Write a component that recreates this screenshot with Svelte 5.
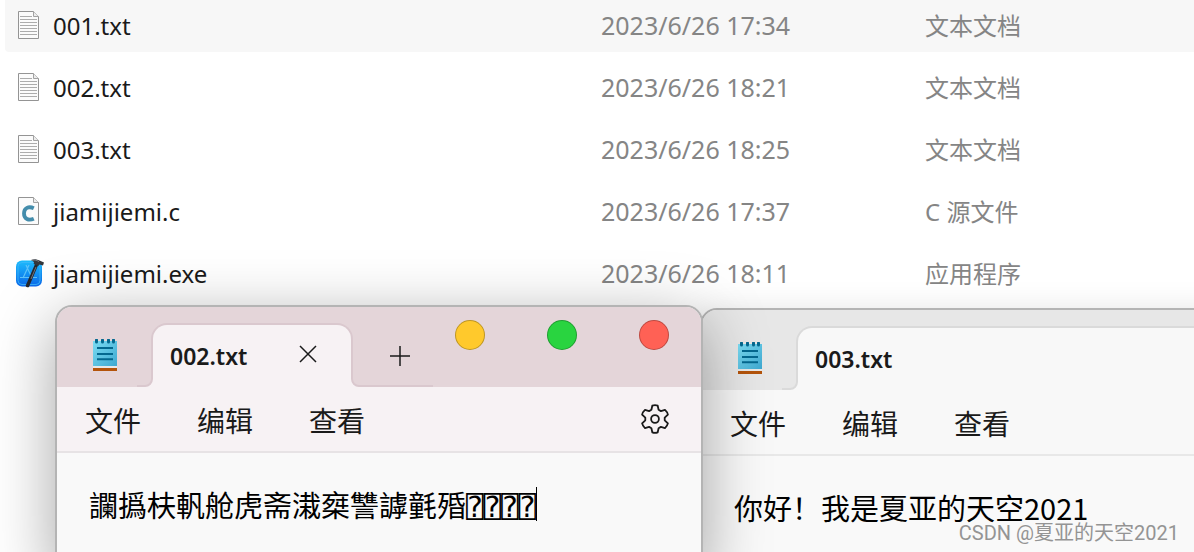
<script lang="ts">
interface FileRow {
	name: string;
	date: string;
	type: string;
	icon: "text" | "c" | "app";
	active?: boolean;
}

const files: FileRow[] = [
	{ name: "001.txt", date: "2023/6/26 17:34", type: "文本文档", icon: "text", active: true },
	{ name: "002.txt", date: "2023/6/26 18:21", type: "文本文档", icon: "text" },
	{ name: "003.txt", date: "2023/6/26 18:25", type: "文本文档", icon: "text" },
	{ name: "jiamijiemi.c", date: "2023/6/26 17:37", type: "C 源文件", icon: "c" },
	{ name: "jiamijiemi.exe", date: "2023/6/26 18:11", type: "应用程序", icon: "app" },
];

const menus = ["文件", "编辑", "查看"];

// 加密后的内容，末尾是不可显示的控制字符
let encrypted = $state("讕撝枎軓舱虎斋溨椉讐謼氃殙⍰⍰⍰⍰");
let decrypted = $state("你好！我是夏亚的天空2021");
</script>

{#snippet fileIcon(kind: string)}
	{#if kind === "app"}
		<svg class="file-icon" viewBox="0 0 30 30" aria-hidden="true">
			<defs>
				<linearGradient id="appBlue" x1="0" y1="0" x2="0" y2="1">
					<stop offset="0" stop-color="#1cbcfc" />
					<stop offset="1" stop-color="#0b68ea" />
				</linearGradient>
			</defs>
			<rect x="1" y="1.500" width="26" height="26" rx="6" fill="url(#appBlue)" />
			<rect x="3" y="3.500" width="22" height="22" rx="4" fill="none" stroke="#3fb9fa" stroke-width=".8" />
			<path d="M11 6l6 13M14 6L8 19M5 18.500h17" fill="none" stroke="#5cc2fa" stroke-width="1.200" />
			<path d="M20.500 4l3 1.300-9.500 22.500c-.6 1.300-4 0-3.200-1.600z" fill="#25272c" />
			<path d="M16 1c3-1.400 6-.9 8.500.6l4.500 1.800-1 3-3.500-1-1.300 1.500-4.500-1.800.3-2z" fill="#34373c" />
			<path d="M17 1.400c3-.8 5 0 7 1.200M21 8l-5 12" fill="none" stroke="#92979d" stroke-width=".7" />
		</svg>
	{:else}
		<svg class="file-icon" viewBox="0 0 30 30" aria-hidden="true">
			<path d="M3.500 .5h15l5 5v22h-20z" fill="#fbfbfb" stroke="#949494" />
			<path d="M18.500 .5v5h5" fill="#ececec" stroke="#a2a2a2" />
			{#if kind === "text"}
				<path d="M5 5.500h12M5 8.500h17M5 11.500h17M5 14.500h17M5 17.500h17M5 20.500h17M5 23.500h17" fill="none" stroke="#acacac" />
			{:else}
				<path d="M18.800 11.300c-5.200-2.500-9.800-.2-9.800 5.200s4.600 7.500 9.800 5.200" fill="none" stroke="#438cab" stroke-width="3.800" />
			{/if}
		</svg>
	{/if}
{/snippet}

{#snippet notepadIcon()}
	<svg class="notepad-icon" viewBox="0 0 24 32" aria-hidden="true">
		<defs>
			<linearGradient id="pad" x1="0" y1="0" x2="1" y2="1">
				<stop offset="0" stop-color="#7bdcf3" />
				<stop offset="1" stop-color="#3ea8d0" />
			</linearGradient>
		</defs>
		<path d="M0 27h24v5H0z" fill="#b4540b" />
		<path d="M0 26h24v3H0z" fill="#e8e8e8" />
		<path d="M0 2h24v25H0z" fill="url(#pad)" />
		<path d="M3.500 1v2M9.500 1v2M15.500 1v2M20.500 1v2" stroke="#04688f" stroke-width="3" stroke-linecap="round" />
		<path d="M4 9h16M4 15h16M4 20.200h16" stroke="#04688f" stroke-width="2" />
	</svg>
{/snippet}

{#snippet flare(side: string)}
	<svg class="flare {side}" viewBox="0 0 16 12" aria-hidden="true">
		<path class="flare-fill" d="M6 12A9 9 0 0 0 15 3V0H16V12z" />
		<path class="flare-line" d="M0 11H8A7 7 0 0 0 15 4V0" />
	</svg>
{/snippet}

{#snippet menuBar()}
	<nav class="menu-bar">
		{#each menus as menu}
			<button class="menu-item">{menu}</button>
		{/each}
		<button class="settings" aria-label="设置">
			<svg viewBox="0 0 28 30" aria-hidden="true">
				<path
					d="M11.300 1.700Q14 .7 16.700 1.700L17.600 5.800 19.900 7.100 24 5.900Q26.300 8 26.900 10.600L23.700 13.700V16.300L26.900 19.400Q26.300 22 24 24.100L19.900 22.900 17.600 24.200 16.700 28.300Q14 29.300 11.300 28.300L10.400 24.200 8.100 22.900 4 24.100Q1.700 22 1.100 19.400L4.300 16.300V13.700L1.100 10.600Q1.700 8 4 5.900L8.100 7.100 10.400 5.800z"
				/>
				<circle cx="14" cy="15" r="3.900" />
			</svg>
		</button>
	</nav>
{/snippet}

<main class="desktop">
	<!-- 文件列表 -->
	<table class="files">
		<colgroup>
			<col class="col-name" />
			<col class="col-date" />
			<col />
		</colgroup>
		<tbody>
			{#each files as file}
				<tr class:active={file.active}>
					<td>
						<div class="name">
							{@render fileIcon(file.icon)}
							<span>{file.name}</span>
						</div>
					</td>
					<td class="meta">{file.date}</td>
					<td class="meta type">{file.type}</td>
				</tr>
			{/each}
		</tbody>
	</table>

	<!-- 003.txt -->
	<section class="window back">
		<header class="title-bar">
			{@render notepadIcon()}
			{@render flare("left")}
			<div class="tab wide">
				<span>003.txt</span>
			</div>
		</header>
		{@render menuBar()}
		<div class="editor">
			<textarea aria-label="003.txt" rows="1" spellcheck="false" bind:value={decrypted}></textarea>
		</div>
	</section>

	<!-- 002.txt -->
	<section class="window front">
		<header class="title-bar">
			{@render notepadIcon()}
			{@render flare("left")}
			<div class="tab">
				<span>002.txt</span>
				<button class="close-tab" aria-label="关闭标签页">
					<svg viewBox="0 0 18 18" aria-hidden="true"><path d="M1 1l16 16M17 1L1 17" /></svg>
				</button>
			</div>
			{@render flare("right")}
			<button class="new-tab" aria-label="新建标签页">
				<svg viewBox="0 0 20 20" aria-hidden="true"><path d="M0 10h20M10 0v20" /></svg>
			</button>
			<div class="controls">
				<button class="minimize" aria-label="最小化"></button>
				<button class="maximize" aria-label="最大化"></button>
				<button class="close" aria-label="关闭"></button>
			</div>
		</header>
		{@render menuBar()}
		<div class="editor">
			<textarea aria-label="002.txt" rows="1" spellcheck="false" bind:value={encrypted}></textarea>
			<span class="caret"></span>
		</div>
	</section>

	<div class="watermark">CSDN @夏亚的天空2021</div>
</main>

<style>
:global(body) {
	margin: 0;
	background: #fff;
}

.desktop {
	position: relative;
	height: 100vh;
	overflow: hidden;
	font-family: "Noto Sans", "Noto Sans CJK SC", sans-serif;
	color: #1a1a1a;
}

button {
	padding: 0;
	border: 0;
	background: none;
	color: inherit;
	font: inherit;
}

svg {
	display: block;
	flex: none;
}

/* 文件列表 */
.files {
	width: calc(100% - 5px);
	margin: -10px 0 0 5px;
	table-layout: fixed;
	border-collapse: separate;
	border-spacing: 0 10px;
}

.col-name {
	width: 596px;
}

.col-date {
	width: 324px;
}

td {
	height: 52px;
	padding: 0;
	vertical-align: top;
	white-space: nowrap;
}

.active td {
	background: #f7f7f7;
}

.active td:first-child {
	border-radius: 0 0 0 4px;
}

.name {
	display: flex;
	align-items: center;
	gap: 8px;
	height: 52px;
	padding-left: 10px;
	font-size: 24px;
	line-height: 52px;
}

.file-icon {
	width: 30px;
	height: 30px;
}

.meta {
	color: #858585;
	font-size: 25px;
	line-height: 50px;
}

.type {
	font-size: 24px;
	line-height: 52px;
}

/* 记事本窗口 */
.window {
	--bar: #e7e7e7;
	--tab: #f8f8f8;
	--line: #dadada;
	--rule: #e8e8e8;
	position: absolute;
	bottom: -20px;
	box-sizing: border-box;
	border: 2px solid #b4b4b4;
	border-radius: 17px;
	background: #f9f9f9;
	overflow: hidden;
}

.front {
	--bar: #e4d5d9;
	--tab: #f7f2f4;
	--line: #dac8ce;
	--rule: #e7e3e5;
	top: 305px;
	left: 55px;
	width: 648px;
	box-shadow: 0 16px 64px rgba(0, 0, 0, 0.36);
}

.back {
	top: 308px;
	right: -154px;
	left: 700px;
	box-shadow: 0 8px 36px rgba(0, 0, 0, 0.16);
}

.title-bar {
	display: flex;
	align-items: flex-end;
	height: 80px;
	padding-left: 36px;
	background: var(--bar);
}

.notepad-icon {
	width: 24px;
	height: 32px;
	margin: 0 20px 16px 0;
}

.flare {
	z-index: 1;
	width: 16px;
	height: 12px;
}

.flare.left {
	margin-right: -2px;
}

.flare.right {
	margin-left: -2px;
	transform: scaleX(-1);
}

.flare-fill {
	fill: var(--tab);
}

.flare-line {
	fill: none;
	stroke: var(--line);
	stroke-width: 2;
}

.tab {
	display: flex;
	align-items: center;
	justify-content: space-between;
	box-sizing: border-box;
	width: 202px;
	height: 64px;
	padding: 0 34px 0 17px;
	border: 2px solid var(--line);
	border-bottom: 0;
	border-radius: 16px 16px 0 0;
	background: var(--tab);
	font-size: 23px;
	font-weight: 600;
}

.tab.wide {
	flex: 1;
}

.close-tab {
	padding-bottom: 4px;
}

.close-tab svg {
	width: 18px;
	height: 18px;
}

.close-tab path,
.new-tab path {
	fill: none;
	stroke: #1a1a1a;
	stroke-width: 1.5;
}

.new-tab {
	display: flex;
	align-items: center;
	justify-content: center;
	box-sizing: border-box;
	width: 66px;
	height: 64px;
	padding-top: 4px;
	border-bottom: 2px solid var(--line);
}

.new-tab svg {
	width: 20px;
	height: 20px;
}

.controls {
	display: flex;
	align-self: flex-start;
	gap: 62px;
	margin-left: auto;
	padding: 13px 32px 0 0;
}

.controls button {
	box-sizing: border-box;
	width: 30px;
	height: 30px;
	border: 1px solid rgba(0, 0, 0, 0.25);
	border-radius: 50%;
}

.minimize {
	background: #ffc92c;
}

.maximize {
	background: #29d440;
}

.close {
	background: #ff6155;
}

.menu-bar {
	display: flex;
	align-items: center;
	gap: 56px;
	height: 64px;
	padding: 0 32px 0 28px;
	border-bottom: 2px solid var(--rule);
	background: var(--tab);
}

.menu-item {
	padding-top: 4px;
	font-size: 28px;
	line-height: 40px;
}

.settings {
	margin-left: auto;
}

.settings svg {
	width: 28px;
	height: 30px;
	fill: none;
	stroke: #1a1a1a;
	stroke-width: 1.8;
	stroke-linejoin: round;
}

.editor {
	display: flex;
	align-items: center;
	padding: 32px;
}

textarea {
	field-sizing: content;
	padding: 0;
	border: 0;
	outline: 0;
	background: none;
	color: #000;
	font-family: "Noto Sans CJK SC", "DejaVu Sans Mono", monospace;
	font-size: 29px;
	line-height: 38px;
	white-space: pre;
	resize: none;
	overflow: hidden;
}

.caret {
	width: 1px;
	height: 34px;
	background: #000;
}

.watermark {
	position: absolute;
	right: 15px;
	bottom: 6px;
	color: #949494;
	font-family: Roboto, "Noto Sans CJK SC", sans-serif;
	font-size: 20px;
	line-height: 26px;
}
</style>
